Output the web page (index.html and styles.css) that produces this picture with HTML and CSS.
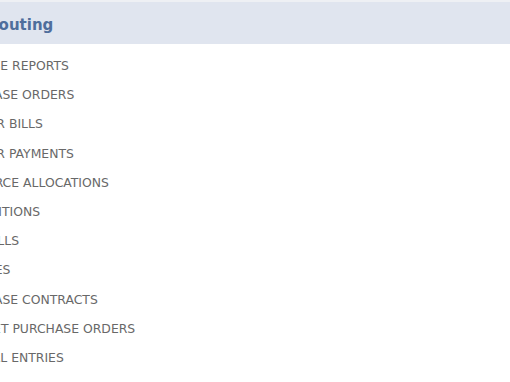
FILE: index.html
```html
<html>
<head>
<title>Approval Routing</title>
<meta http-equiv="Content-Type" content="text/html; charset=UTF-8" />
<link rel="stylesheet" href="styles.css">
</head>
<body>

<div class="Panel">
   <div class="Head">
      <span class="HeadTitle">Approval Routing</span>
   </div>
   <ul class="List">
      <li>Expense Reports</li>
      <li>Purchase Orders</li>
      <li>Vendor Bills</li>
      <li>Vendor Payments</li>
      <li>Resource Allocations</li>
      <li>Requisitions</li>
      <li>Time Bills</li>
      <li>Invoices</li>
      <li>Purchase Contracts</li>
      <li>Blanket Purchase Orders</li>
      <li>Journal Entries</li>
   </ul>
</div>

</body>
</html>
```

FILE: styles.css
```css
body{
   margin:0;
   background:#ffffff;
   font-family:"DejaVu Sans", Verdana, sans-serif;
   overflow:hidden;
}
.Panel{
   width:600px;
   margin-left:-48.5px;
   border-top:2px solid #eef0f4;
}
.Head{
   height:42px;
   box-sizing:border-box;
   padding-top:3px;
   display:flex;
   align-items:center;
   background:#e0e5ef;
}
.HeadTitle{
   margin-left:-45.5px;
   font-size:15px;
   font-weight:bold;
   color:#4f6e9c;
}
.List{
   list-style:none;
   margin:0;
   padding:7px 0 0 0;
}
.List li{
   height:29.2px;
   line-height:29.2px;
   font-size:12.4px;
   color:#686868;
   text-transform:uppercase;
}
```
